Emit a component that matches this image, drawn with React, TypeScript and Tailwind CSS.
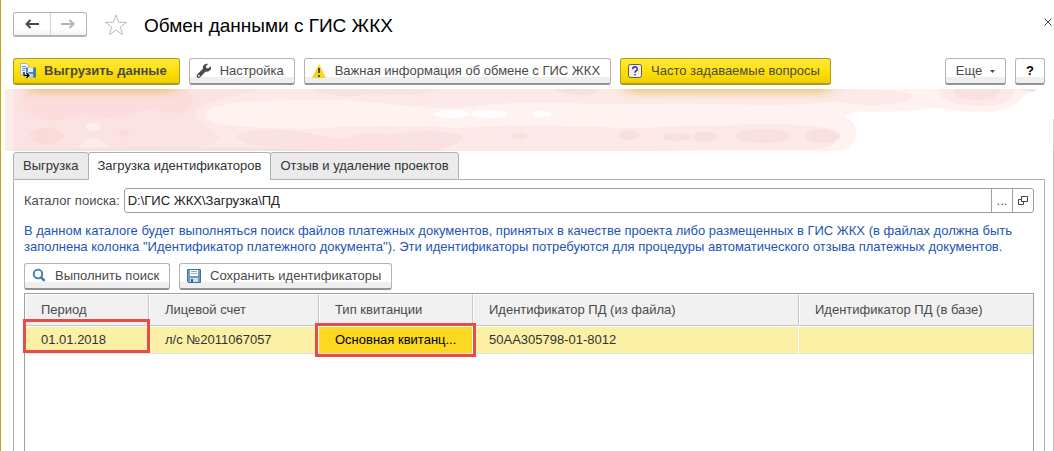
import { useState } from 'react';
import type { ReactNode } from 'react';

const tabs = ['Выгрузка', 'Загрузка идентификаторов', 'Отзыв и удаление проектов'];

const columns = [
  { title: 'Период', width: 'w-[124px]' },
  { title: 'Лицевой счет', width: 'w-[170px]' },
  { title: 'Тип квитанции', width: 'w-[154px]' },
  { title: 'Идентификатор ПД (из файла)', width: 'w-[326px]' },
  { title: 'Идентификатор ПД (в базе)', width: '' },
];

const ExportIcon = () => (
  <svg width="16" height="16" viewBox="0 0 16 16" aria-hidden="true">
    <path d="M.5.500h6l2 2v9h-8z" fill="#f4f8fc" stroke="#9fb6cf" />
    <path d="M2 3.500h4M2 5.500h4M2 7.500h3M2 9.500h2" stroke="#6d94bf" />
    <path d="M6 4.500h9.500v10H6z" fill="#4f8ac6" />
    <path d="M8 4.500h5v4.500H8z" fill="#e8f1fa" />
    <path d="M9 11h4v3.500H9z" fill="#c3d6ea" />
    <path d="M14.500 4.500h1v10h-1z" fill="#24507f" />
    <path d="M4 9v3.500h4.500M6.500 10l2.500 2.500L6.500 15" fill="none" stroke="#fff" strokeWidth="2.500" />
    <path d="M4 9v3.500h4.500M6.500 10l2.500 2.500L6.500 15" fill="none" stroke="#000" strokeWidth="1.300" />
  </svg>
);

const WrenchIcon = () => (
  <svg width="16" height="16" viewBox="0 0 16 16" aria-hidden="true">
    <path
      d="M14.700 3.200l-2.600 2.300-1.900-.5-.4-1.900L12.200.9C10.300.3 8.300 1 7.300 2.700c-.6 1-.6 2.100-.3 3.100L1.300 11.300c-.9.9-.9 2.200-.1 3s2.100.8 3-.1l5.400-5.700c1.700.5 3.500 0 4.600-1.400 1-1.200 1.100-2.700.5-3.900zM2.900 13.600a.9.9 0 1 1 0-1.800.9.9 0 0 1 0 1.800z"
      fill="#4a4a4a"
    />
  </svg>
);

const WarningIcon = () => (
  <svg width="16" height="16" viewBox="0 0 16 16" aria-hidden="true">
    <path d="M8 1l7 14H1z" fill="#f9d423" />
    <path d="M8 5v5M8 12v2" stroke="#222" strokeWidth="1.500" />
  </svg>
);

const FaqIcon = () => (
  <svg width="16" height="16" viewBox="0 0 16 16" aria-hidden="true">
    <rect x="1.500" y="1.500" width="13" height="13" rx="2" fill="#f5f2dc" stroke="#5c5c5c" />
    <path d="M5.700 6.200C5.700 3 10.300 3 10.300 5.900c0 1.800-2.300 1.700-2.300 3.900M8 11v1.500" fill="none" stroke="#2727c4" strokeWidth="1.400" />
  </svg>
);

const SearchIcon = () => (
  <svg width="16" height="16" viewBox="0 0 16 16" aria-hidden="true">
    <circle cx="7" cy="6" r="4.300" fill="#f3f9ff" stroke="#3c77ab" strokeWidth="1.800" />
    <path d="M10 9.200l3.500 3.600" stroke="#3c77ab" strokeWidth="2.400" />
  </svg>
);

const SaveIcon = () => (
  <svg width="16" height="16" viewBox="0 0 16 16" aria-hidden="true">
    <path d="M1.500 1.500h13v13h-12l-1-1z" fill="#6f9bc8" stroke="#44719f" />
    <path d="M4 2h8v6H4z" fill="#fff" />
    <path d="M5 3.500h6M5 5.500h6" stroke="#9cabb9" />
    <path d="M4 10h8v4H4z" fill="#d5dce3" />
    <path d="M5 11h2v3H5z" fill="#315f8e" />
  </svg>
);

const OpenIcon = () => (
  <svg width="10" height="10" viewBox="0 0 10 10" aria-hidden="true">
    <path d="M3.500.5h6v5h-6zM3.500 3.500h-3v5h5v-3" fill="none" stroke="#444" />
  </svg>
);

// Pale band with soft spots under the toolbar
const Banner = () => (
  <svg className="block h-[62px] min-w-0 flex-1" viewBox="0 0 1032 62" preserveAspectRatio="none" aria-hidden="true">
    <defs>
      <filter id="soft" x="-20%" y="-200%" width="140%" height="500%">
        <feGaussianBlur stdDeviation="8 4" />
      </filter>
    </defs>
    <path d="M0 0H1032C1020 4 1016 12 1007 17C985 28 955 22 930 19C905 22 875 24 848 23C839 26 838 29 844 31C855 36 853 53 840 61L830 62H0z" fill="#fff2f1" />
    <path d="M0 0H835C860 1 902 0 908 7C900 18 855 18 830 12C790 19 700 14 650 15C590 17 540 10 480 16C430 24 390 14 340 11C290 12 215 8 200 24C194 35 230 39 300 40C380 34 430 40 480 38C550 34 610 42 680 37C740 36 800 32 828 41C837 46 832 56 820 59C780 63 740 59 690 61L640 62H0z" fill="#fde9e9" />
    <path d="M935 0H1010C1008 14 990 19 960 16C938 13 932 6 935 0z" fill="#fde9e9" />
    <path d="M949 0H995C996 8 985 12 970 11C955 9 946 6 949 0z" fill="#fbdfe1" />
    <path d="M0 0H255C225 11 188 10 190 28C194 37 217 43 214 51C200 59 180 62 150 62H0z" fill="#fbe3e3" />
    <path d="M24 0H180C188 6 190 12 186 18C182 24 178 25 170 24C155 25 146 17 130 24C110 37 90 23 70 27C42 38 20 26 15 12z" fill="#fddcdb" />
    <ellipse cx="42" cy="47" rx="17" ry="8" fill="#fddada" />
    <ellipse cx="119" cy="44" rx="5" ry="4" fill="#fddada" />
    <ellipse cx="88" cy="38" rx="7" ry="4" fill="#fff0ef" />
    <path d="M72 62C78 44 96 47 108 62z" fill="#fdebea" />
    <path d="M231 48C235 39 265 40 290 42C315 44 330 53 344 49C362 39 380 49 400 43C426 41 460 43 458 49C450 58 445 56 430 62H320C290 58 236 60 231 48z" fill="#fbe1e1" />
    <path d="M0 59C100 60 200 56 300 60C390 61 410 56 443 62H0z" fill="#f4e2e1" />
    <path d="M305 0H430C422 8 390 7 370 5C345 9 320 8 305 0z" fill="#f5e4e3" />
    <path d="M550 0H595C590 8 565 8 550 0zM949 0h46c-10 4-34 5-46 0zM1012 0h20l-4 3z" fill="#f1e3e2" />
    <g fill="#fff">
      <ellipse cx="447" cy="25" rx="17" ry="4" />
      <ellipse cx="484" cy="25" rx="18" ry="4" />
      <ellipse cx="537" cy="25" rx="9" ry="3" />
    </g>
    <g fill="#fadfe2">
      <ellipse cx="514" cy="47" rx="9" ry="3" />
      <ellipse cx="624" cy="46" rx="11" ry="5" />
      <ellipse cx="672" cy="48" rx="14" ry="4" />
      <ellipse cx="700" cy="48" rx="13" ry="5" />
      <ellipse cx="758" cy="47" rx="27" ry="7" />
      <ellipse cx="818" cy="47" rx="17" ry="7" />
    </g>
    <rect x="24" y="-8" width="146" height="11" fill="#e4c678" filter="url(#soft)" />
    <rect x="620" y="-8" width="206" height="12" fill="#ebca80" filter="url(#soft)" />
    <rect x="-8" y="-10" width="14" height="80" fill="#fdf4e8" filter="url(#soft)" />
  </svg>
);

type ButtonProps = {
  icon?: ReactNode;
  yellow?: boolean;
  className?: string;
  children: ReactNode;
};

const ToolButton = ({ icon, yellow, className = '', children }: ButtonProps) => (
  <button
    type="button"
    className={`flex h-[27px] shrink-0 items-center gap-2 whitespace-nowrap rounded-[3px] border border-b-2 ${
      yellow
        ? 'border-[#b09a20] bg-linear-to-b from-[#ffe737] via-[#ffe100] to-[#f0cf00]'
        : 'border-[#b3b3b3] border-b-[#929292] bg-linear-to-b from-white from-75% to-[#efefef] to-75%'
    } ${className}`}
  >
    {icon}
    {children}
  </button>
);

const App = () => {
  const [activeTab, setActiveTab] = useState(1);
  const [path, setPath] = useState('D:\\ГИС ЖКХ\\Загрузка\\ПД');

  return (
    <div className="flex h-screen flex-col overflow-hidden border-l border-[#c9a20c] bg-white font-['Liberation_Sans',Arial,sans-serif] text-[13px] leading-4 text-[#4a4a4a]">
      <header className="flex items-start pl-3 pt-3">
        <div className="flex h-[25px] w-[74px] rounded-[3px] border border-b-2 border-[#b3b3b3] bg-linear-to-b from-white from-70% to-[#f3f3f3]">
          <button type="button" aria-label="Назад" className="flex flex-1 items-center justify-center border-r border-[#d0d0d0]">
            <svg width="14" height="10" viewBox="0 0 14 10" aria-hidden="true">
              <path d="M14 5H3" stroke="#4a4a4a" strokeWidth="2" />
              <path d="M5.500 1L1.500 5l4 4" fill="none" stroke="#4a4a4a" strokeWidth="2" />
            </svg>
          </button>
          <button type="button" aria-label="Вперед" className="flex flex-1 items-center justify-center">
            <svg width="14" height="10" viewBox="0 0 14 10" aria-hidden="true">
              <path d="M0 5h11" stroke="#b3b3b3" strokeWidth="2" />
              <path d="M8.500 1l4 4-4 4" fill="none" stroke="#b3b3b3" strokeWidth="2" />
            </svg>
          </button>
        </div>
        <button type="button" aria-label="Избранное" className="ml-[17px] mt-[2px]">
          <svg width="24" height="22" viewBox="0 0 24 22" aria-hidden="true">
            <path d="M12 1l2.700 7.300h8L16.300 13l2.400 7.800L12 16.200l-6.700 4.600L7.700 13 1.300 8.300h8z" fill="#fff" stroke="#b4bcc4" />
          </svg>
        </button>
        <h1 className="ml-4 mt-[2px] text-[19px] leading-6 text-black">Обмен данными с ГИС ЖКХ</h1>
        <button type="button" aria-label="Закрыть" className="ml-auto mr-[2px] mt-[6px]">
          <svg width="8" height="8" viewBox="0 0 8 8" aria-hidden="true">
            <path d="M.5.5l7 7M7.500.5l-7 7" stroke="#444" />
          </svg>
        </button>
      </header>

      <div className="mt-5 flex gap-[9px] pl-3 pr-[9px]">
        <ToolButton yellow icon={<ExportIcon />} className="px-[6px] font-bold">
          <span className="pr-[6px]">Выгрузить данные</span>
        </ToolButton>
        <ToolButton icon={<WrenchIcon />} className="px-[6px]">
          <span className="pr-1">Настройка</span>
        </ToolButton>
        <ToolButton icon={<WarningIcon />} className="px-[6px]">
          <span className="pr-1">Важная информация об обмене с ГИС ЖКХ</span>
        </ToolButton>
        <ToolButton yellow icon={<FaqIcon />} className="px-[6px]">
          <span className="pr-1">Часто задаваемые вопросы</span>
        </ToolButton>
        <ToolButton className="ml-auto w-[61px] justify-center">
          Еще
          <svg width="5" height="3" viewBox="0 0 5 3" aria-hidden="true">
            <path d="M0 0h5L2.500 3z" fill="#4a4a4a" />
          </svg>
        </ToolButton>
        <ToolButton className="w-[30px] justify-center font-bold text-black">?</ToolButton>
      </div>

      <div className="mt-1 flex pl-1">
        <Banner />
        <div className="h-8 w-[17px] self-end border-r border-[#d4d4d4]" />
      </div>

      <main className="flex min-h-0 flex-1 flex-col border-r border-[#c4c4c4] pl-3 pr-2 pt-px">
        <div role="tablist" className="flex">
          {tabs.map((tab, i) => (
            <button
              key={tab}
              type="button"
              role="tab"
              aria-selected={i === activeTab}
              onClick={() => setActiveTab(i)}
              className={`-mr-px h-7 whitespace-nowrap rounded-t-[3px] border border-[#b0b0b0] px-[9px] text-[#333] ${
                i === activeTab ? 'border-b-white bg-white' : 'bg-[#ebebeb]'
              }`}
            >
              {tab}
            </button>
          ))}
          <div className="ml-px flex-1 border-b border-[#b0b0b0]" />
        </div>

        <section className="flex min-h-0 flex-1 flex-col border-x border-[#b0b0b0] px-[10px] pt-2">
          <div className="flex items-center">
            <label htmlFor="path" className="mr-1 whitespace-nowrap">
              Каталог поиска:
            </label>
            <div className="flex h-[25px] flex-1 rounded-[3px] border border-[#a0a0a0]">
              <input
                id="path"
                value={path}
                onChange={(e) => setPath(e.target.value)}
                className="min-w-0 flex-1 px-[3px] text-[#222] outline-none"
              />
              <button type="button" aria-label="Выбрать" className="w-[21px] border-l border-[#a0a0a0]">
                ...
              </button>
              <button type="button" aria-label="Открыть" className="flex w-[21px] items-center justify-center border-l border-[#a0a0a0]">
                <OpenIcon />
              </button>
            </div>
          </div>

          <p className="mt-[10px] text-[#2255b5]">
            В данном каталоге будет выполняться поиск файлов платежных документов, принятых в качестве проекта либо размещенных в ГИС ЖКХ (в файлах должна быть заполнена колонка "Идентификатор платежного документа"). Эти идентификаторы потребуются для процедуры автоматического отзыва платежных документов.
          </p>

          <div className="mt-2 flex gap-[9px]">
            <ToolButton icon={<SearchIcon />} className="px-[6px]">
              <span className="pr-1">Выполнить поиск</span>
            </ToolButton>
            <ToolButton icon={<SaveIcon />} className="px-[6px]">
              <span className="pr-1">Сохранить идентификаторы</span>
            </ToolButton>
          </div>

          <div className="mt-[3px] min-h-0 flex-1 border-x border-t border-[#a0a0a0]">
            <table className="w-full table-fixed border-separate border-spacing-0 text-left">
              <thead>
                <tr className="h-8">
                  {columns.map((column) => (
                    <th
                      key={column.title}
                      className={`${column.width} border border-b-[#c8c8c8] border-l-white border-r-[#c8c8c8] border-t-white bg-[#f1f1f1] pl-[15px] font-normal last:border-r-0`}
                    >
                      {column.title}
                    </th>
                  ))}
                </tr>
              </thead>
              <tbody>
                <tr className="h-7 whitespace-nowrap bg-[#fcf0a6] text-[#333] *:border-b *:border-t *:border-b-[#e2e2e2] *:border-t-white">
                  <td className="relative border-r border-r-white pl-4">
                    01.01.2018
                    <span className="pointer-events-none absolute -inset-x-[2px] bottom-0 -top-2 border-3 border-[#ea4b46]" />
                  </td>
                  <td className="border-r border-r-white pl-4">л/с №2011067057</td>
                  <td className="relative border-r border-r-white bg-[#fcd920] pl-4 text-black">
                    Основная квитанц...
                    <span className="pointer-events-none absolute -inset-1 border-3 border-[#ea4b46]" />
                  </td>
                  <td className="border-r border-r-white pl-4">50АА305798-01-8012</td>
                  <td />
                </tr>
              </tbody>
            </table>
          </div>
        </section>
      </main>
    </div>
  );
};

export default App;
